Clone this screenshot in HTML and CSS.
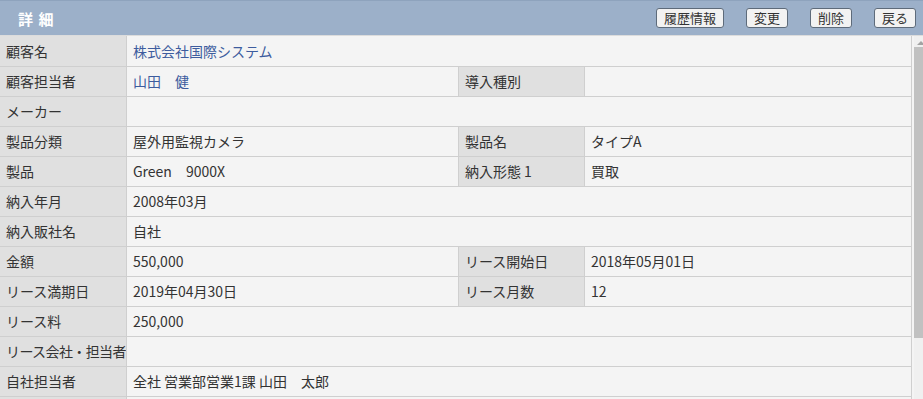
FILE: index.html
```html
<!DOCTYPE html>
<html lang="ja">
<head>
  <meta charset="UTF-8" />
  <title>詳細</title>
  <link rel="stylesheet" href="styles.css">
</head>
<body>
  <div class="header">
    <h2>詳 細</h2>
    <div class="actions">
      <button>履歴情報</button>
      <button>変更</button>
      <button>削除</button>
      <button>戻る</button>
    </div>
  </div>

  <div class="body">
    <table class="detail">
      <colgroup>
        <col class="c-label" />
        <col class="c-value" />
        <col class="c-label2" />
        <col />
      </colgroup>
      <tr>
        <th>顧客名</th>
        <td colspan="3"><a href="#">株式会社国際システム</a></td>
      </tr>
      <tr>
        <th>顧客担当者</th>
        <td><a href="#">山田　健</a></td>
        <th>導入種別</th>
        <td></td>
      </tr>
      <tr>
        <th>メーカー</th>
        <td colspan="3"></td>
      </tr>
      <tr>
        <th>製品分類</th>
        <td>屋外用監視カメラ</td>
        <th>製品名</th>
        <td>タイプA</td>
      </tr>
      <tr>
        <th>製品</th>
        <td>Green　9000X</td>
        <th>納入形態 1</th>
        <td>買取</td>
      </tr>
      <tr>
        <th>納入年月</th>
        <td colspan="3">2008年03月</td>
      </tr>
      <tr>
        <th>納入販社名</th>
        <td colspan="3">自社</td>
      </tr>
      <tr>
        <th>金額</th>
        <td>550,000</td>
        <th>リース開始日</th>
        <td>2018年05月01日</td>
      </tr>
      <tr>
        <th>リース満期日</th>
        <td>2019年04月30日</td>
        <th>リース月数</th>
        <td>12</td>
      </tr>
      <tr>
        <th>リース料</th>
        <td colspan="3">250,000</td>
      </tr>
      <tr>
        <th class="tight">リース会社・担当者</th>
        <td colspan="3"></td>
      </tr>
      <tr>
        <th>自社担当者</th>
        <td colspan="3">全社 営業部営業1課 山田　太郎</td>
      </tr>
      <tr>
        <th></th>
        <td colspan="3"></td>
      </tr>
    </table>

    <div class="scrollbar">
      <div class="arrow"></div>
      <div class="thumb"></div>
    </div>
  </div>
</body>
</html>
```

FILE: styles.css
```css
body {
  font-family: "Noto Sans CJK JP", "Noto Sans", sans-serif;
  font-size: 14px;
  color: #333;
  margin: 0;
  overflow: hidden;
  background: #f4f4f4;
}
.header {
  height: 35px;
  background: #9cb0c9;
  border-top: 1px solid #8ea3bd;
  display: flex;
  align-items: center;
  justify-content: space-between;
  padding: 0 7px 0 18px;
  box-sizing: border-box;
}
.header h2 {
  margin: 0;
  font-size: 15px;
  font-weight: bold;
  color: #fff;
  letter-spacing: 1px;
}
.actions {
  display: flex;
  gap: 22px;
}
.actions button {
  font-family: inherit;
  font-size: 13px;
  color: #333;
  background: #f2f2f2;
  border: 1px solid #5e6b7a;
  border-radius: 3px;
  height: 20px;
  padding: 0 7px;
  line-height: 18px;
}
.body {
  display: flex;
  border-top: 1px solid #dcdcdc;
}
.detail {
  flex: 1;
  border-collapse: collapse;
  table-layout: fixed;
}
.c-label { width: 116px; }
.c-value { width: 332px; }
.c-label2 { width: 126px; }
.detail tr {
  height: 30px;
}
.detail th,
.detail td {
  border: 1px solid #cfcfcf;
  padding: 0 6px;
  text-align: left;
  font-weight: normal;
  white-space: nowrap;
  overflow: hidden;
}
.detail tr:first-child th,
.detail tr:first-child td {
  border-top: none;
}
.detail th {
  background: #e0e0e0;
  border-left: none;
  padding-right: 0;
}
.detail th.tight {
  letter-spacing: -0.6px;
}
.detail td {
  background: #f4f4f4;
}
.detail a {
  color: #3d5c9e;
  text-decoration: none;
}
.scrollbar {
  width: 9px;
  margin-left: 2px;
  background: #f0f0f0;
  display: flex;
  flex-direction: column;
  align-items: stretch;
}
.arrow {
  height: 11px;
  position: relative;
}
.arrow::after {
  content: "";
  position: absolute;
  left: 3px;
  top: 5px;
  border-left: 4px solid transparent;
  border-right: 4px solid transparent;
  border-bottom: 4px solid #a3a3a3;
}
.thumb {
  height: 291px;
  background: #c1c1c1;
}
```
